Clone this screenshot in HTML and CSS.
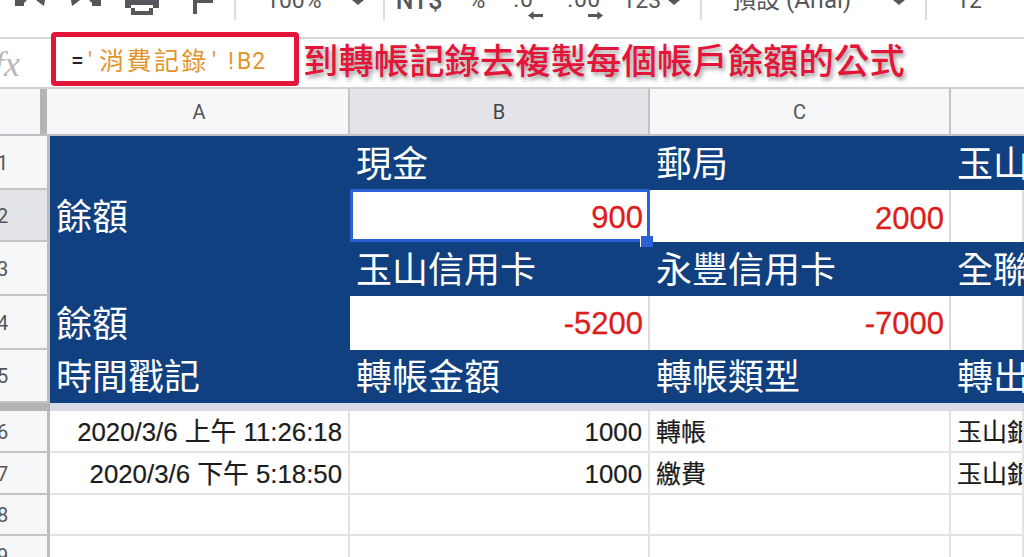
FILE: index.html
```html
<!DOCTYPE html>
<html lang="zh-Hant">
<head>
<meta charset="utf-8">
<title>餘額試算表</title>
<link rel="stylesheet" href="styles.css">
</head>
<body>
<div class="page">
  <div class="toolbar">
    <div class="tools">
      <svg class="ico undo" viewBox="0 0 31 8"><path d="M0 0h12L9 3l0 3-9 0zM21 0h9l-1 6-3-2z"/></svg>
      <svg class="ico redo" viewBox="0 0 31 8"><path d="M31 0H19l3 3 0 3 9 0zM10 0H1l1 6 3-2z"/></svg>
      <svg class="ico print" viewBox="0 0 34 15"><path d="M0 0h34v8h-6V5H6v3H0zM6 8h4v3h14V8h4v7H6z"/></svg>
      <svg class="ico paint" viewBox="0 0 20 14"><path d="M0 0h4v14H0zM4 0h16v3H4z"/></svg>
      <span class="sep s1"></span>
      <span class="tx t100">100%</span>
      <i class="caret c1"></i>
      <span class="sep s2"></span>
      <span class="tx nt">NT$</span>
      <span class="tx pct">%</span>
      <span class="dec d0"><span class="tx">.0</span><svg class="arrow" viewBox="0 0 16 9"><path d="M0 4.500l6-4.500v3h10v3H6v3z"/></svg></span>
      <span class="dec d00"><span class="tx">.00</span><svg class="arrow" viewBox="0 0 16 9"><path d="M16 4.500l-6-4.500v3H0v3h10v3z"/></svg></span>
      <span class="tx n123">123</span>
      <i class="caret c2"></i>
      <span class="sep s3"></span>
      <span class="tx fontname">預設 (Arial)</span>
      <i class="caret c3"></i>
      <span class="sep s4"></span>
      <span class="tx size">12</span>
    </div>
  </div>

  <div class="formulabar">
    <span class="fx">fx</span>
  </div>

  <div class="sheet">
    <div class="corner"><span class="freezebar"></span></div>
    <div class="colhead">A</div>
    <div class="colhead active">B</div>
    <div class="colhead">C</div>
    <div class="colhead last"></div>

    <div class="rowhead">1</div>
    <div class="cell navy"></div>
    <div class="cell navy">現金</div>
    <div class="cell navy">郵局</div>
    <div class="cell navy">玉山銀行</div>

    <div class="rowhead active">2</div>
    <div class="cell navy">餘額</div>
    <div class="cell val selected">900<span class="handle"></span></div>
    <div class="cell val">2000</div>
    <div class="cell val"></div>

    <div class="rowhead">3</div>
    <div class="cell navy"></div>
    <div class="cell navy">玉山信用卡</div>
    <div class="cell navy">永豐信用卡</div>
    <div class="cell navy">全聯福利卡</div>

    <div class="rowhead">4</div>
    <div class="cell navy">餘額</div>
    <div class="cell val high">-5200</div>
    <div class="cell val high">-7000</div>
    <div class="cell val"></div>

    <div class="rowhead">5</div>
    <div class="cell navy">時間戳記</div>
    <div class="cell navy">轉帳金額</div>
    <div class="cell navy">轉帳類型</div>
    <div class="cell navy">轉出帳戶</div>

    <div class="freeze-head"></div>
    <div class="freeze-line"></div>

    <div class="rowhead">6</div>
    <div class="cell body num">2020/3/6 上午 11:26:18</div>
    <div class="cell body num">1000</div>
    <div class="cell body">轉帳</div>
    <div class="cell body">玉山銀行</div>

    <div class="rowhead">7</div>
    <div class="cell body num">2020/3/6 下午 5:18:50</div>
    <div class="cell body num">1000</div>
    <div class="cell body">繳費</div>
    <div class="cell body">玉山銀行</div>

    <div class="rowhead">8</div>
    <div class="cell body"></div>
    <div class="cell body"></div>
    <div class="cell body"></div>
    <div class="cell body"></div>

    <div class="rowhead">9</div>
    <div class="cell body"></div>
    <div class="cell body"></div>
    <div class="cell body"></div>
    <div class="cell body"></div>
  </div>

  <div class="callout"><span class="eq">=</span><span class="q1">'</span><span class="zh">消費記錄</span><span class="q2">'</span><span class="bang">!</span><span class="cellref">B2</span></div>
  <div class="note">到轉帳記錄去複製每個帳戶餘額的公式</div>
</div>
</body>
</html>
```
FILE: styles.css
```css
* { box-sizing: border-box; }
html, body { margin: 0; padding: 0; background: #fff; }
.page {
  position: relative;
  width: 1024px;
  height: 557px;
  overflow: hidden;
  background: #fff;
  font-family: "Liberation Sans", "Noto Sans CJK TC", sans-serif;
}

/* toolbar, cut off by the top of the picture */
.toolbar { height: 39px; border-bottom: 2px solid #d6d6d6; }
.tools { display: flex; align-items: flex-end; height: 20px; overflow: hidden; color: #55575a; }
.tx {
  flex: none;
  font: 23px/21px Roboto, "Noto Sans CJK TC", sans-serif;
  margin-bottom: 9px;
  white-space: nowrap;
}
.ico { flex: none; display: block; fill: #55575a; align-self: flex-start; }
.undo { width: 31px; height: 8px; margin-left: 15px; }
.redo { width: 31px; height: 8px; margin-left: 24px; }
.print { width: 34px; height: 15px; margin-left: 24px; }
.paint { width: 20px; height: 14px; margin-left: 34px; }
.sep { flex: none; width: 2px; height: 20px; background: #dcdcdc; }
.s1 { margin-left: 21px; }
.s2 { margin-left: 19px; }
.s3 { margin-left: 20px; }
.s4 { margin-left: 20px; }
.caret {
  flex: none;
  align-self: flex-start;
  width: 0; height: 0;
  border-left: 6px solid transparent;
  border-right: 6px solid transparent;
  border-top: 5px solid #55575a;
}
.t100 { margin-left: 30px; }
.c1 { margin-left: 30px; }
.nt { margin-left: 11px; font-size: 25px; font-weight: 500; }
.pct { margin-left: 26px; }
.dec { flex: none; display: flex; flex-direction: column; align-self: flex-start; height: 20px; }
.dec .tx { margin-bottom: 0; margin-top: -11px; letter-spacing: .5px; }
.arrow { display: block; width: 15px; height: 9px; margin-top: 1px; fill: #55575a; }
.d0 { margin-left: 28px; width: 30px; }
.d0 .arrow { margin-left: 15px; }
.d00 { margin-left: 24px; width: 36px; }
.d00 .arrow { margin-left: 21px; }
.n123 { margin-left: 19px; }
.c2 { margin-left: 7px; }
.fontname { margin-left: 30px; font-size: 24px; }
.c3 { margin-left: 42px; }
.size { margin-left: 29px; }

/* formula bar */
.formulabar { height: 48px; display: flex; align-items: center; }
.fx {
  font: italic 36px/1 "Liberation Serif", serif;
  color: #b9b9b9;
  margin-left: -6px;
  margin-top: 2px;
}

/* grid */
.sheet {
  display: grid;
  grid-template-columns: 50px 300px 300px 301px 73px;
  grid-template-rows: 49px 54px 52px 54px 54px 53px 8px 42px 42px 41px 41px;
}
.corner { background: #f6f7f9; border-top: 2px solid #d0d0d0; border-bottom: 2px solid #bdc1c6; display: flex; justify-content: flex-end; }
.freezebar { width: 7px; margin-right: 3px; background: #b4b4b4; }
.colhead {
  background: #f6f7f9;
  border-top: 2px solid #d0d0d0;
  border-bottom: 2px solid #bdc1c6;
  border-right: 2px solid #c4c4c4;
  display: flex; align-items: center; justify-content: center;
  font: 20px/1 Roboto, sans-serif;
  color: #555;
}
.colhead.active { background: #e2e4e8; color: #444; }
.colhead.last { border-right: 0; }
.rowhead {
  background: #f6f7f9;
  border-right: 3px solid #bcbcbc;
  border-bottom: 2px solid #c4c4c4;
  padding-top: 1px;
  font: 20px/1 Roboto, sans-serif;
  color: #555;
  display: flex; align-items: center;
  text-indent: -3px;
  overflow: hidden;
}
.rowhead.active { background: #e2e4e8; }
.cell {
  position: relative;
  overflow: hidden;
  white-space: nowrap;
  padding-left: 6px;
  display: flex;
}
.navy {
  background: #10407f;
  color: #fff;
  font-size: 36px;
  line-height: 44px;
  padding-top: 3px;
  align-items: center;
}
.val {
  background: #fff;
  color: #dd1c1c;
  -webkit-text-stroke: .3px #dd1c1c;
  font-size: 31px;
  line-height: 36px;
  align-items: flex-end;
  justify-content: flex-end;
  border-right: 2px solid #dcdcdc;
  padding-right: 5px;
  padding-bottom: 5px;
}
.high { padding-bottom: 8px; }
.selected {
  border: 3px solid #2a62d6;
  overflow: visible;
  margin-top: -1px;
  padding-right: 4px;
  padding-bottom: 3px;
  padding-left: 5px;
  z-index: 2;
}
.handle {
  position: absolute;
  right: -6px;
  bottom: -8px;
  width: 13px;
  height: 11px;
  background: #2a62d6;
  border-left: 1px solid #fff;
}
.freeze-head { background: #b4b4b4; }
.freeze-line { grid-column: 2 / -1; background: #d6d9e6; }
.body {
  background: #fff;
  color: #1c1c1c;
  -webkit-text-stroke: .2px #1c1c1c;
  font-size: 25px;
  line-height: 34px;
  align-items: flex-end;
  border-right: 2px solid #e2e2e2;
  border-bottom: 2px solid #e2e2e2;
  padding-bottom: 2px;
}
.num { justify-content: flex-end; font-size: 25.800px; padding-right: 6px; }

/* annotations laid over the screenshot */
.callout {
  position: absolute;
  left: 51px;
  top: 32px;
  width: 248px;
  height: 54px;
  border: 5px solid #e3163a;
  border-radius: 4px;
  background: #fff;
  padding-left: 15px;
  padding-top: 4px;
  display: flex;
  align-items: center;
  font: 23px/1 Roboto, "Noto Sans CJK TC", sans-serif;
  color: #e2952e;
  white-space: nowrap;
}
.eq { color: #222; width: 17px; }
.q1 { width: 11px; }
.zh { font-size: 25px; letter-spacing: 2.500px; width: 110px; }
.q2 { width: 19px; padding-left: 3px; }
.bang { width: 9px; }
.cellref { letter-spacing: 1px; }
.note {
  position: absolute;
  left: 303px;
  top: 36px;
  font: 500 35.400px/46px "Noto Sans CJK TC", sans-serif;
  color: #e3163a;
  white-space: nowrap;
  text-shadow: 2px 3px 4px rgba(0,0,0,.4);
}
```
